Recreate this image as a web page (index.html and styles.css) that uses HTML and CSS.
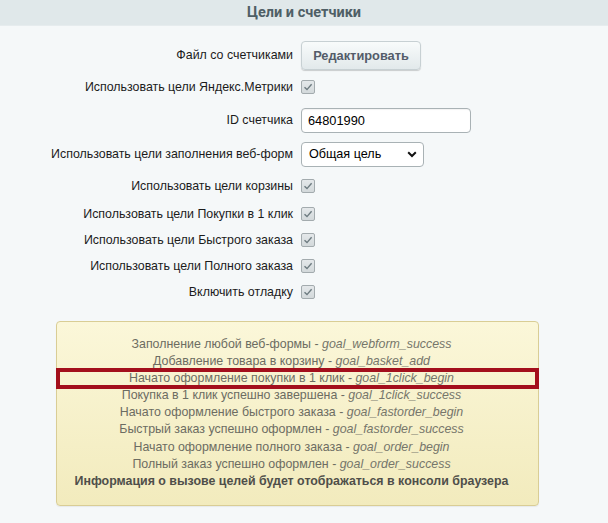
FILE: index.html
```html
<!DOCTYPE html>
<html lang="ru">
<head>
<meta charset="utf-8">
<link rel="stylesheet" href="styles.css">
</head>
<body>
<div class="header">Цели и счетчики</div>
<div class="form">
  <div class="row r1"><div class="label">Файл со счетчиками</div><div class="field"><button class="btn">Редактировать</button></div></div>
  <div class="row r2"><div class="label">Использовать цели Яндекс.Метрики</div><div class="field"><span class="cb"><svg viewBox="0 0 14 14" width="14" height="14"><path d="M3.5 7.2 L6 9.6 L10.6 4.2" fill="none" stroke="#6d7b80" stroke-width="1.4"/></svg></span></div></div>
  <div class="row r3"><div class="label">ID счетчика</div><div class="field"><span class="input">64801990</span></div></div>
  <div class="row r4"><div class="label">Использовать цели заполнения веб-форм</div><div class="field"><span class="select">Общая цель<svg class="chev" viewBox="0 0 10 7" width="10" height="7"><path d="M1.2 1.3 L5 5 L8.8 1.3" fill="none" stroke="#111" stroke-width="2"/></svg></span></div></div>
  <div class="row r5"><div class="label">Использовать цели корзины</div><div class="field"><span class="cb"><svg viewBox="0 0 14 14" width="14" height="14"><path d="M3.5 7.2 L6 9.6 L10.6 4.2" fill="none" stroke="#6d7b80" stroke-width="1.4"/></svg></span></div></div>
  <div class="row r6"><div class="label">Использовать цели Покупки в 1 клик</div><div class="field"><span class="cb"><svg viewBox="0 0 14 14" width="14" height="14"><path d="M3.5 7.2 L6 9.6 L10.6 4.2" fill="none" stroke="#6d7b80" stroke-width="1.4"/></svg></span></div></div>
  <div class="row r7"><div class="label">Использовать цели Быстрого заказа</div><div class="field"><span class="cb"><svg viewBox="0 0 14 14" width="14" height="14"><path d="M3.5 7.2 L6 9.6 L10.6 4.2" fill="none" stroke="#6d7b80" stroke-width="1.4"/></svg></span></div></div>
  <div class="row r8"><div class="label">Использовать цели Полного заказа</div><div class="field"><span class="cb"><svg viewBox="0 0 14 14" width="14" height="14"><path d="M3.5 7.2 L6 9.6 L10.6 4.2" fill="none" stroke="#6d7b80" stroke-width="1.4"/></svg></span></div></div>
  <div class="row r9"><div class="label">Включить отладку</div><div class="field"><span class="cb"><svg viewBox="0 0 14 14" width="14" height="14"><path d="M3.5 7.2 L6 9.6 L10.6 4.2" fill="none" stroke="#6d7b80" stroke-width="1.4"/></svg></span></div></div>
</div>
<div class="notice-wrap">
  <div class="notice">
    <div>Заполнение любой веб-формы - <i>goal_webform_success</i></div>
    <div>Добавление товара в корзину - <i>goal_basket_add</i></div>
    <div>Начато оформление покупки в 1 клик - <i>goal_1click_begin</i></div>
    <div>Покупка в 1 клик успешно завершена - <i>goal_1click_success</i></div>
    <div>Начато оформление быстрого заказа - <i>goal_fastorder_begin</i></div>
    <div>Быстрый заказ успешно оформлен - <i>goal_fastorder_success</i></div>
    <div>Начато оформление полного заказа - <i>goal_order_begin</i></div>
    <div>Полный заказ успешно оформлен - <i>goal_order_success</i></div>
    <div class="strong">Информация о вызове целей будет отображаться в консоли браузера</div>
  </div>
  <div class="highlight"></div>
</div>
</body>
</html>
```
FILE: styles.css
```css
html, body {
  margin: 0;
  padding: 0;
}
body {
  background: #f5f8f9;
  font-family: "Liberation Sans", Arial, sans-serif;
  font-size: 12.4px;
  color: #000;
  width: 608px;
  height: 523px;
  overflow: hidden;
}
.header {
  height: 26px;
  line-height: 25px;
  background: #e0e8ea;
  border-bottom: 1px solid #e6ecee;
  box-sizing: border-box;
  text-align: center;
  font-family: Roboto, "Liberation Sans", sans-serif;
  font-weight: bold;
  font-size: 14.5px;
  color: #4f5f66;
}
.form {
  padding-top: 13px;
}
.row {
  display: grid;
  grid-template-columns: 293px 1fr;
  column-gap: 8px;
  align-items: center;
}
.r1 { height: 32px; }
.r2 { height: 32px; }
.r3 { height: 34px; }
.r4 { height: 34px; }
.r5 { height: 29px; }
.r6 { height: 27px; }
.r7 { height: 26px; }
.r8 { height: 26px; }
.r9 { height: 26px; }
.label {
  text-align: right;
  white-space: nowrap;
  color: #1b1b1b;
}
.field {
  display: flex;
  align-items: center;
}
.btn {
  width: 120px;
  height: 29px;
  padding: 0;
  border: 1px solid #c7d0d3;
  border-radius: 4px;
  background: linear-gradient(#f8fbfb, #e2e9eb);
  box-shadow: 0 1px 1px rgba(0,0,0,0.18);
  font-family: "Liberation Sans", Arial, sans-serif;
  font-size: 12.8px;
  font-weight: bold;
  color: #535c69;
}
.cb {
  width: 14px;
  height: 14px;
  box-sizing: border-box;
  border: 1px solid #a3abae;
  border-radius: 2px;
  background: linear-gradient(#e4e8ea, #d3d9db);
  display: flex;
  align-items: center;
  justify-content: center;
}
.cb svg {
  display: block;
  flex: none;
}
.input {
  width: 170px;
  height: 25px;
  box-sizing: border-box;
  border: 1px solid #a9b2b5;
  border-radius: 4px;
  background: #fff;
  padding: 0 6px;
  line-height: 23px;
  font-size: 12.8px;
  color: #000;
  box-shadow: inset 0 1px 1px rgba(0,0,0,0.05);
}
.select {
  width: 123px;
  height: 25px;
  box-sizing: border-box;
  border: 1px solid #a9b2b5;
  border-radius: 4px;
  background: #fff;
  padding: 0 6px 0 7px;
  display: flex;
  align-items: center;
  justify-content: space-between;
  font-size: 12.6px;
  color: #000;
}
.chev {
  display: block;
}
.notice-wrap {
  position: relative;
  margin: 16px 0 0 56px;
  width: 483px;
}
.notice {
  box-sizing: border-box;
  width: 483px;
  height: 185px;
  border: 1px solid #d9cd95;
  border-radius: 4px;
  background: linear-gradient(#fbf7d9, #f2ebbd);
  padding: 14px 12px 0 0;
  text-align: center;
  line-height: 17.1px;
  color: #6c6c62;
  box-shadow: 0 1px 1px rgba(0,0,0,0.06);
}
.notice i {
  color: #76766b;
}
.notice .strong {
  font-weight: bold;
  color: #4f4f4a;
}
.highlight {
  position: absolute;
  left: 0;
  top: 47px;
  width: 483px;
  height: 21px;
  box-sizing: border-box;
  border: 4px solid #a30f1c;
}
```
